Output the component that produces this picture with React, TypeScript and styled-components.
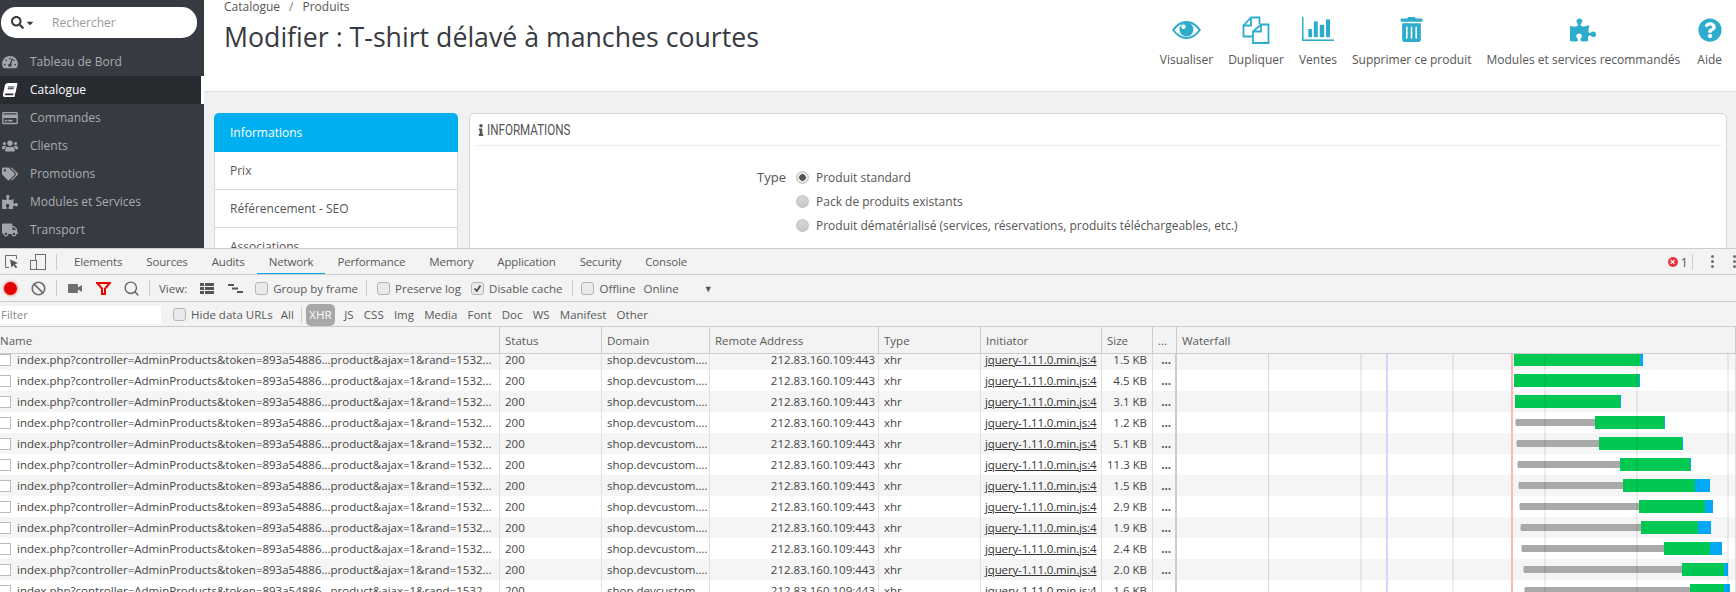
import styled, { createGlobalStyle } from "styled-components";
import { Ban, Search } from "lucide-react";
import {
  FaBook,
  FaCaretDown,
  FaInfo,
  FaPuzzlePiece,
  FaQuestionCircle,
  FaRegCreditCard,
  FaSearch,
  FaTachometerAlt,
  FaTags,
  FaTrashAlt,
  FaTruck,
  FaUsers,
} from "react-icons/fa";

const GlobalStyle = createGlobalStyle`
  html, body {
    margin: 0;
    padding: 0;
    background: #fff;
  }
  * {
    box-sizing: border-box;
  }
`;

const Page = styled.div`
  width: 1736px;
  height: 592px;
  overflow: hidden;
  display: flex;
  flex-direction: column;
  font-family: "Open Sans", sans-serif;
`;

/* ---------- back office ---------- */

const Shop = styled.div`
  height: 248px;
  display: flex;
  overflow: hidden;
`;

const Sidebar = styled.aside`
  width: 204px;
  flex: none;
  background: #363a41;
  padding-top: 7px;
`;

const SearchPill = styled.div`
  width: 196px;
  height: 31px;
  margin-left: 1px;
  background: #fff;
  border-radius: 15px;
  display: flex;
  align-items: center;
  padding-left: 10px;
  color: #363a41;
  font-size: 12px;
  svg:first-child {
    font-size: 13px;
  }
  svg:nth-child(2) {
    font-size: 10px;
    margin-left: 1px;
  }
  span {
    margin-left: 17px;
    color: #999;
  }
`;

const Nav = styled.nav`
  margin-top: 10px;
`;

const NavItem = styled.div<{ $active?: boolean }>`
  height: 28px;
  display: flex;
  align-items: center;
  padding-bottom: 1px;
  font-size: 12px;
  color: ${(p) => (p.$active ? "#fff" : "#abadb0")};
  background: ${(p) => (p.$active ? "#282b30" : "transparent")};
  border-right: 3px solid ${(p) => (p.$active ? "#fff" : "transparent")};
  svg {
    width: 16px;
    height: 14px;
    margin: 0 12px 0 2px;
    color: ${(p) => (p.$active ? "#fff" : "#a2a5a9")};
  }
`;

const SlantedBook = styled(FaBook)`
  transform: skewX(-12deg);
`;

const Main = styled.main`
  flex: 1;
  min-width: 0;
  background: #eff1f2;
`;

const Header = styled.header`
  height: 92px;
  background: #fff;
  border-bottom: 1px solid #dcdfe1;
  display: flex;
  justify-content: space-between;
  padding: 0 14px 0 20px;
`;

const Breadcrumb = styled.div`
  height: 14px;
  font-size: 12px;
  line-height: 14px;
  color: #555;
  span {
    margin: 0 9px;
    color: #777;
  }
`;

const Title = styled.h1`
  margin: 8px 0 0;
  font-size: 26.7px;
  line-height: 30px;
  font-weight: 400;
  color: #363a41;
`;

const Actions = styled.div`
  display: flex;
  gap: 15px;
  padding-top: 16px;
`;

const Action = styled.div`
  display: flex;
  flex-direction: column;
  align-items: center;
  color: #2eacce;
  &:last-child {
    margin-left: 2px;
  }
`;

const ActionIcon = styled.div`
  height: 27px;
  display: flex;
  align-items: center;
`;

const ActionLabel = styled.div`
  margin-top: 10px;
  font-size: 12px;
  line-height: 14px;
  color: #555;
  white-space: nowrap;
`;

const Content = styled.div`
  display: flex;
  gap: 11px;
  padding: 21px 9px 0 10px;
`;

const SideTabs = styled.div`
  width: 244px;
  flex: none;
  height: 140px;
  border-radius: 5px 5px 0 0;
  overflow: hidden;
`;

const SideTab = styled.div<{ $active?: boolean }>`
  height: ${(p) => (p.$active ? "39px" : "38px")};
  display: flex;
  align-items: center;
  padding-left: ${(p) => (p.$active ? "16px" : "15px")};
  font-size: 12px;
  color: ${(p) => (p.$active ? "#fff" : "#555")};
  background: ${(p) => (p.$active ? "#00aff0" : "#fff")};
  border-style: solid;
  border-color: #d3d8db;
  border-width: ${(p) => (p.$active ? "0" : "0 1px 1px")};
`;

const Panel = styled.section`
  flex: 1;
  height: 140px;
  background: #fff;
  border: 1px solid #d3d8db;
  border-radius: 5px 5px 0 0;
  padding: 0 4px;
`;

const PanelHead = styled.div`
  height: 32px;
  display: flex;
  align-items: center;
  border-bottom: 1px solid #eee;
  color: #555;
  svg {
    width: 6px;
    height: 12px;
    margin: 0 3px 0 4px;
  }
`;

const PanelTitle = styled.span`
  font-family: "Roboto", sans-serif;
  font-size: 15px;
  margin-top: 1px;
  transform: scaleX(0.775);
  transform-origin: left center;
`;

const FormGrid = styled.div`
  display: grid;
  grid-template-columns: 312px 1fr;
  column-gap: 10px;
  padding-top: 19px;
`;

const FormLabel = styled.div`
  text-align: right;
  font-size: 13px;
  line-height: 24px;
  color: #555;
`;

const RadioList = styled.div`
  display: flex;
  flex-direction: column;
`;

const RadioRow = styled.div`
  height: 24px;
  display: flex;
  align-items: center;
  gap: 7px;
  font-size: 12px;
  color: #555;
`;

const Radio = styled.span<{ $on?: boolean }>`
  width: 13px;
  height: 13px;
  border-radius: 50%;
  background: ${(p) =>
    p.$on
      ? "radial-gradient(circle, #555 0 3px, #e4e4e4 3.5px)"
      : "linear-gradient(#d8d8d8, #c6c6c6)"};
  border: 1px solid #c0c0c0;
`;

/* ---------- devtools ---------- */

const Dev = styled.div`
  flex: 1;
  min-height: 0;
  display: flex;
  flex-direction: column;
  font-family: "Open Sans", sans-serif;
  font-size: 11.5px;
  color: #5a5a5a;
  background: #f3f3f3;
  border-top: 1px solid #ccc;
`;

const TabBar = styled.div`
  height: 26px;
  flex: none;
  display: flex;
  align-items: stretch;
  border-bottom: 1px solid #ccc;
  overflow: hidden;
`;

const DevTab = styled.div<{ $active?: boolean }>`
  padding: 0 12px;
  display: flex;
  align-items: center;
  letter-spacing: -0.15px;
  border-bottom: 2px solid ${(p) => (p.$active ? "#03a9f4" : "transparent")};
  margin-bottom: -1px;
`;

const TabIcons = styled.div`
  width: 56px;
  display: flex;
  align-items: center;
  padding-left: 4px;
  gap: 11px;
`;

const Sep = styled.div`
  width: 1px;
  height: 16px;
  flex: none;
  align-self: center;
  background: #ccc;
`;

const TabSep = styled(Sep)`
  margin-right: 5px;
`;

const ErrorBox = styled.div`
  margin-left: auto;
  display: flex;
  align-items: center;
  gap: 3px;
  font-size: 13px;
`;

const ErrorDot = styled.span`
  width: 10px;
  height: 10px;
  border-radius: 50%;
  background: #e6323c;
  color: #fff;
  font-size: 9px;
  line-height: 10px;
  text-align: center;
  font-family: "Liberation Sans", sans-serif;
  font-weight: 700;
`;

const MoreDots = styled.div<{ $width: number }>`
  width: ${(p) => p.$width}px;
  flex: none;
  display: flex;
  flex-direction: column;
  align-items: flex-end;
  justify-content: center;
  gap: 2px;
  i {
    width: 3px;
    height: 3px;
    border-radius: 50%;
    background: #6e6e6e;
  }
`;

const Toolbar = styled.div`
  height: 27px;
  flex: none;
  display: flex;
  align-items: center;
  border-bottom: 1px solid #ccc;
`;

const ToolIcon = styled.div<{ $gap?: number }>`
  width: 20px;
  flex: none;
  display: flex;
  justify-content: center;
  align-items: center;
  margin-right: ${(p) => p.$gap ?? 8}px;
`;

const ToolSep = styled(Sep)<{ $left?: number; $right?: number }>`
  margin-left: ${(p) => p.$left ?? 0}px;
  margin-right: ${(p) => p.$right ?? 9}px;
`;

const RecordDot = styled.span`
  width: 13px;
  height: 13px;
  border-radius: 50%;
  background: #e60000;
  box-shadow: 0 0 2px 1px rgba(230, 0, 0, 0.35);
`;

const Check = styled.label<{ $left?: number }>`
  display: flex;
  align-items: center;
  gap: 5px;
  margin-left: ${(p) => p.$left ?? 0}px;
  white-space: nowrap;
`;

const CheckBox = styled.span`
  width: 13px;
  height: 13px;
  flex: none;
  border: 1px solid #b4b4b4;
  border-radius: 3px;
  background: #eaeaea;
  display: flex;
  align-items: center;
  justify-content: center;
`;

const ToolText = styled.span<{ $left?: number; $right?: number }>`
  margin-left: ${(p) => p.$left ?? 0}px;
  margin-right: ${(p) => p.$right ?? 0}px;
  white-space: nowrap;
`;

const DropArrow = styled.span`
  margin-left: 25px;
  font-size: 9px;
  color: #555;
`;

const FilterBar = styled.div`
  height: 25px;
  flex: none;
  display: flex;
  align-items: center;
  padding-top: 1px;
  border-bottom: 1px solid #ccc;
`;

const FilterInput = styled.div`
  width: 161px;
  height: 18px;
  padding-left: 1px;
  background: #fff;
  color: #8a8a8a;
  line-height: 18px;
`;

const TypePill = styled.span<{ $on?: boolean }>`
  height: 22px;
  padding: 0 ${(p) => (p.$on ? "3.5px" : "0")};
  margin-left: ${(p) => (p.$on ? "0" : "10.2px")};
  margin-right: ${(p) => (p.$on ? "-1px" : "0")};
  display: flex;
  align-items: center;
  border-radius: 5px;
  color: ${(p) => (p.$on ? "#fff" : "#5a5a5a")};
  background: ${(p) => (p.$on ? "#a8a8a8" : "transparent")};
`;

const COLUMNS = "500px 102px 108px 169px 102px 121px 51px 24px 559px";

const HeadRow = styled.div`
  height: 27px;
  flex: none;
  display: grid;
  grid-template-columns: ${COLUMNS};
  border-bottom: 1px solid #ccc;
`;

const HeadCell = styled.div<{ $flush?: boolean }>`
  padding-left: ${(p) => (p.$flush ? "0" : "5px")};
  line-height: 27px;
  border-right: 1px solid #ccc;
  white-space: nowrap;
  overflow: hidden;
`;

const Rows = styled.div`
  position: relative;
  flex: 1;
  min-height: 0;
  overflow: hidden;
  background: #fff;
`;

const RowList = styled.div`
  margin-top: -5px;
`;

const Row = styled.div<{ $odd: boolean }>`
  height: 21px;
  display: grid;
  grid-template-columns: ${COLUMNS};
  background: ${(p) => (p.$odd ? "#fff" : "#f5f5f5")};
  color: #444;
`;

const Cell = styled.div`
  padding: 0 5px;
  line-height: 21px;
  border-right: 1px solid #e0e0e0;
  white-space: nowrap;
  overflow: hidden;
`;

const AddressCell = styled(Cell)`
  text-align: right;
  padding-right: 3px;
`;

const SizeCell = styled(Cell)`
  text-align: right;
`;

const NameCell = styled(Cell)`
  display: flex;
  align-items: center;
  padding: 0;
  gap: 6px;
`;

const FileIcon = styled.span`
  width: 11px;
  height: 12px;
  flex: none;
  background: #fff;
  border: 1px solid #bbb;
  border-left: 0;
`;

const InitiatorCell = styled(Cell)`
  text-decoration: underline;
  color: #333;
  padding-left: 4px;
  letter-spacing: -0.14px;
`;

const DotsCell = styled(Cell)`
  text-align: right;
  padding: 0 4px 0 0;
  border-right: 2px solid #ccc;
  color: #555;
  font-weight: 700;
`;

const WaterfallSvg = styled.svg`
  position: absolute;
  left: 0;
  top: 0;
  pointer-events: none;
`;

function EyeIcon() {
  return (
    <svg width="29" height="18" viewBox="0 0 29 18" fill="none">
      <path
        d="M1.2 9C5.2 3.4 9.6 1 14.5 1S23.8 3.4 27.8 9C23.8 14.6 19.4 17 14.5 17S5.2 14.6 1.2 9Z"
        stroke="currentColor"
        strokeWidth="2"
      />
      <circle cx="14.5" cy="8.5" r="7" fill="currentColor" />
      <circle cx="11.5" cy="5.8" r="2.2" fill="#fff" />
    </svg>
  );
}

function CopyIcon() {
  return (
    <svg width="28" height="28" viewBox="0 0 28 28" fill="none" stroke="currentColor" strokeWidth="1.8">
      <path d="M17.5 8V1.5H9L1.5 9.5V20.5H11" />
      <path d="M9 1.5V9.5H1.5" />
      <path d="M19 8.5H26.5V27H11V15.5L19 8.5Z" fill="#fff" />
      <path d="M19 8.5V15.5H11" />
    </svg>
  );
}

function ChartIcon() {
  return (
    <svg width="32" height="25" viewBox="0 0 32 25" fill="currentColor">
      <rect x="0" y="0" width="1.5" height="24" />
      <rect x="0" y="22.4" width="32" height="1.6" />
      <rect x="6.3" y="12" width="3.8" height="8.2" />
      <rect x="11.8" y="4.4" width="4" height="15.8" />
      <rect x="17.8" y="7.8" width="4.4" height="12.4" />
      <rect x="24" y="2.4" width="4" height="17.8" />
    </svg>
  );
}

function InspectIcon() {
  return (
    <svg width="15" height="15" viewBox="0 0 15 15" fill="none">
      <path d="M5 13.5H1.5V1.5H12.5V5" stroke="#6e6e6e" strokeWidth="1" />
      <path d="M6 5.5L14 9L10.8 10.2L13.2 13L11.8 14.2L9.5 11.3L7.6 13.8Z" fill="#555" />
    </svg>
  );
}

function DeviceIcon() {
  return (
    <svg width="16" height="16" viewBox="0 0 16 16" fill="none" stroke="#6e6e6e">
      <rect x="5.5" y="0.5" width="10" height="15" />
      <rect x="0.5" y="6.5" width="6" height="9" fill="#f3f3f3" />
    </svg>
  );
}

function VideoIcon() {
  return (
    <svg width="14" height="9" viewBox="0 0 14 9" fill="#6e6e6e">
      <rect width="10" height="9" rx="1" />
      <path d="M10 3.5L14 1V8L10 5.5Z" />
    </svg>
  );
}

function FunnelIcon() {
  return (
    <svg width="15" height="13" viewBox="0 0 15 13" fill="none" stroke="#e00" strokeWidth="2">
      <path d="M1.2 1H13.8L9 6.5V12H6V6.5Z" />
    </svg>
  );
}

function ListIcon() {
  return (
    <svg width="14" height="11" viewBox="0 0 14 11" fill="#555">
      <rect width="4" height="3" />
      <rect x="5" width="9" height="3" />
      <rect y="4" width="4" height="3" />
      <rect x="5" y="4" width="9" height="3" />
      <rect y="8" width="4" height="3" />
      <rect x="5" y="8" width="9" height="3" />
    </svg>
  );
}

function TimelineIcon() {
  return (
    <svg width="15" height="9" viewBox="0 0 15 9" fill="#555">
      <rect width="6" height="2" />
      <rect x="4" y="3.5" width="6" height="2" />
      <rect x="9" y="7" width="6" height="2" />
    </svg>
  );
}

function TickIcon() {
  return (
    <svg width="9" height="9" viewBox="0 0 9 9" fill="none" stroke="#444" strokeWidth="1.7">
      <path d="M1.5 4.5L3.8 7L7.5 1.5" />
    </svg>
  );
}

const menu = [
  { label: "Tableau de Bord", icon: <FaTachometerAlt /> },
  { label: "Catalogue", icon: <SlantedBook />, active: true },
  { label: "Commandes", icon: <FaRegCreditCard /> },
  { label: "Clients", icon: <FaUsers /> },
  { label: "Promotions", icon: <FaTags /> },
  { label: "Modules et Services", icon: <FaPuzzlePiece /> },
  { label: "Transport", icon: <FaTruck /> },
];

const actions = [
  { label: "Visualiser", icon: <EyeIcon /> },
  { label: "Dupliquer", icon: <CopyIcon /> },
  { label: "Ventes", icon: <ChartIcon /> },
  { label: "Supprimer ce produit", icon: <FaTrashAlt size={25} /> },
  { label: "Modules et services recommandés", icon: <FaPuzzlePiece size={26} /> },
  { label: "Aide", icon: <FaQuestionCircle size={24} /> },
];

const devTabs = [
  "Elements",
  "Sources",
  "Audits",
  "Network",
  "Performance",
  "Memory",
  "Application",
  "Security",
  "Console",
];

const types = ["JS", "CSS", "Img", "Media", "Font", "Doc", "WS", "Manifest", "Other"];

const columns = ["Name", "Status", "Domain", "Remote Address", "Type", "Initiator", "Size", "...", "Waterfall"];

const sizes = ["1.5", "4.5", "3.1", "1.2", "5.1", "11.3", "1.5", "2.9", "1.9", "2.4", "2.0", "1.6"];

// page x positions of each request: wait start, response start, download start, end
const bars = [
  [1514, 1514, 1640, 1643],
  [1514, 1514, 1639, 1640],
  [1515, 1515, 1620, 1621],
  [1516, 1595, 1664, 1665],
  [1517, 1599, 1682, 1683],
  [1518, 1620, 1690, 1691],
  [1519, 1623, 1695, 1710],
  [1520, 1639, 1705, 1713],
  [1521, 1641, 1698, 1711],
  [1522, 1664, 1710, 1722],
  [1524, 1682, 1724, 1728],
  [1525, 1690, 1724, 1730],
];

const gridLines = [1268, 1360.5, 1452.5, 1544.5, 1636.5, 1727.5];

function Waterfall() {
  return (
    <WaterfallSvg width="1736" height="239">
      {bars.map(([start, green, blue, end], i) => {
        const mid = 5.5 + i * 21;
        return (
          <g key={i}>
            {green > start && <rect x={start - 1} y={mid - 2.5} width="2" height="5" fill="#d0d0d0" />}
            {green > start && <rect x={start} y={mid - 3.5} width={green - start} height="7" fill="#a9a9a9" />}
            <rect x={green} y={mid - 6.5} width={blue - green} height="13" fill="#00c853" />
            <rect x={blue} y={mid - 6.5} width={end - blue} height="13" fill="#03a9f4" />
          </g>
        );
      })}
      {gridLines.map((x) => (
        <rect key={x} x={x} y="0" width="1" height="239" fill="rgba(0,0,0,0.13)" />
      ))}
      <rect x="1386" y="0" width="2" height="239" fill="#d6d6fa" />
      <rect x="1511" y="0" width="2" height="239" fill="#fbb9b9" />
    </WaterfallSvg>
  );
}

export default function App() {
  return (
    <Page>
      <GlobalStyle />
      <Shop>
        <Sidebar>
          <SearchPill>
            <FaSearch />
            <FaCaretDown />
            <span>Rechercher</span>
          </SearchPill>
          <Nav>
            {menu.map((item) => (
              <NavItem key={item.label} $active={item.active}>
                {item.icon}
                {item.label}
              </NavItem>
            ))}
          </Nav>
        </Sidebar>
        <Main>
          <Header>
            <div>
              <Breadcrumb>
                Catalogue<span>/</span>Produits
              </Breadcrumb>
              <Title>Modifier : T-shirt délavé à manches courtes</Title>
            </div>
            <Actions>
              {actions.map((a) => (
                <Action key={a.label}>
                  <ActionIcon>{a.icon}</ActionIcon>
                  <ActionLabel>{a.label}</ActionLabel>
                </Action>
              ))}
            </Actions>
          </Header>
          <Content>
            <SideTabs>
              <SideTab $active>Informations</SideTab>
              <SideTab>Prix</SideTab>
              <SideTab>Référencement - SEO</SideTab>
              <SideTab>Associations</SideTab>
            </SideTabs>
            <Panel>
              <PanelHead>
                <FaInfo />
                <PanelTitle>INFORMATIONS</PanelTitle>
              </PanelHead>
              <FormGrid>
                <FormLabel>Type</FormLabel>
                <RadioList>
                  <RadioRow>
                    <Radio $on />
                    Produit standard
                  </RadioRow>
                  <RadioRow>
                    <Radio />
                    Pack de produits existants
                  </RadioRow>
                  <RadioRow>
                    <Radio />
                    Produit dématérialisé (services, réservations, produits téléchargeables, etc.)
                  </RadioRow>
                </RadioList>
              </FormGrid>
            </Panel>
          </Content>
        </Main>
      </Shop>
      <Dev>
        <TabBar>
          <TabIcons>
            <InspectIcon />
            <DeviceIcon />
          </TabIcons>
          <TabSep />
          {devTabs.map((t) => (
            <DevTab key={t} $active={t === "Network"}>
              {t}
            </DevTab>
          ))}
          <ErrorBox>
            <ErrorDot>×</ErrorDot>1
          </ErrorBox>
          <ToolSep $left={4} $right={0} />
          <MoreDots $width={21}>
            <i />
            <i />
            <i />
          </MoreDots>
          <MoreDots $width={22}>
            <i />
            <i />
            <i />
          </MoreDots>
        </TabBar>
        <Toolbar>
          <ToolIcon>
            <RecordDot />
          </ToolIcon>
          <ToolIcon>
            <Ban size={15} color="#6e6e6e" strokeWidth={2.6} />
          </ToolIcon>
          <ToolSep $right={8} />
          <ToolIcon>
            <VideoIcon />
          </ToolIcon>
          <ToolIcon>
            <FunnelIcon />
          </ToolIcon>
          <ToolIcon>
            <Search size={17} color="#666" strokeWidth={2} />
          </ToolIcon>
          <ToolSep />
          <ToolText $right={10}>View:</ToolText>
          <ToolIcon>
            <ListIcon />
          </ToolIcon>
          <ToolIcon $gap={3}>
            <TimelineIcon />
          </ToolIcon>
          <Check $left={7}>
            <CheckBox />
            Group by frame
          </Check>
          <ToolSep $left={8} $right={10} />
          <Check>
            <CheckBox />
            Preserve log
          </Check>
          <Check $left={10}>
            <CheckBox>
              <TickIcon />
            </CheckBox>
            Disable cache
          </Check>
          <ToolSep $left={10} $right={8} />
          <Check>
            <CheckBox />
            Offline
          </Check>
          <ToolText $left={8}>Online</ToolText>
          <DropArrow>▼</DropArrow>
        </Toolbar>
        <FilterBar>
          <FilterInput>Filter</FilterInput>
          <Check $left={12}>
            <CheckBox />
            Hide data URLs
          </Check>
          <ToolText $left={8}>All</ToolText>
          <ToolSep $left={7} $right={4} />
          <TypePill $on>XHR</TypePill>
          {types.map((t) => (
            <TypePill key={t}>{t}</TypePill>
          ))}
        </FilterBar>
        <HeadRow>
          {columns.map((c, i) => (
            <HeadCell key={c} $flush={i === 0}>
              {c}
            </HeadCell>
          ))}
        </HeadRow>
        <Rows>
          <RowList>
            {sizes.map((size, i) => (
              <Row key={i} $odd={i % 2 === 1}>
                <NameCell>
                  <FileIcon />
                  index.php?controller=AdminProducts&amp;token=893a54886...product&amp;ajax=1&amp;rand=1532...
                </NameCell>
                <Cell>200</Cell>
                <Cell>shop.devcustom....</Cell>
                <AddressCell>212.83.160.109:443</AddressCell>
                <Cell>xhr</Cell>
                <InitiatorCell>jquery-1.11.0.min.js:4</InitiatorCell>
                <SizeCell>{size} KB</SizeCell>
                <DotsCell>...</DotsCell>
                <Cell />
              </Row>
            ))}
          </RowList>
          <Waterfall />
        </Rows>
      </Dev>
    </Page>
  );
}
